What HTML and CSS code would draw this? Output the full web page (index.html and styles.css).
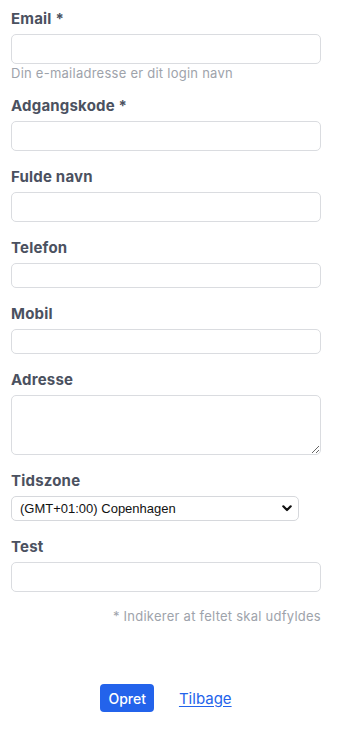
FILE: index.html
```html
<!DOCTYPE html>
<html lang="da">
<head>
<meta charset="utf-8">
<title>Opret bruger</title>
<link rel="stylesheet" href="styles.css">
</head>
<body>
<form class="form">
  <div class="field field-hinted">
    <label class="label" for="email">Email *</label>
    <input class="input" id="email" type="email">
    <p class="hint">Din e-mailadresse er dit login navn</p>
  </div>
  <div class="field">
    <label class="label" for="pw">Adgangskode *</label>
    <input class="input" id="pw" type="password">
  </div>
  <div class="field">
    <label class="label" for="name">Fulde navn</label>
    <input class="input" id="name" type="text">
  </div>
  <div class="field">
    <label class="label" for="tel">Telefon</label>
    <input class="input input-small" id="tel" type="tel">
  </div>
  <div class="field">
    <label class="label" for="mob">Mobil</label>
    <input class="input input-small" id="mob" type="tel">
  </div>
  <div class="field">
    <label class="label" for="addr">Adresse</label>
    <textarea class="input textarea" id="addr"></textarea>
  </div>
  <div class="field">
    <label class="label" for="tz">Tidszone</label>
    <select class="select" id="tz">
      <option>(GMT+01:00) Copenhagen</option>
    </select>
  </div>
  <div class="field">
    <label class="label" for="test">Test</label>
    <input class="input" id="test" type="text">
  </div>
  <p class="footnote">* Indikerer at feltet skal udfyldes</p>
  <div class="actions">
    <button class="btn" type="button">Opret</button>
    <a class="link" href="#">Tilbage</a>
  </div>
</form>
</body>
</html>
```
FILE: styles.css
```css
html, body {
  margin: 0;
  padding: 0;
  background: #ffffff;
}
body {
  font-family: Inter, "Noto Sans", "Liberation Sans", sans-serif;
  color: #4b5160;
}
.form {
  width: 310px;
  padding: 9px 0 0 11px;
  margin: 0;
}
.field {
  margin-bottom: 16px;
}
.label {
  display: block;
  font-size: 15px;
  font-weight: 700;
  line-height: 20px;
  letter-spacing: 0.2px;
  margin-bottom: 5px;
  color: #4b5160;
}
.input {
  display: block;
  box-sizing: border-box;
  width: 310px;
  height: 30px;
  margin: 0;
  padding: 4px 8px;
  border: 1px solid #dadce0;
  border-radius: 5px;
  background: #ffffff;
  font-family: inherit;
  font-size: 14px;
  outline: none;
}
.input-small {
  height: 25px;
}
.textarea {
  height: 60px;
  resize: vertical;
}
.hint {
  margin: 3px 0 0;
  font-size: 13px;
  line-height: 13px;
  letter-spacing: 0.25px;
  color: #9ea3ab;
}
.select {
  display: block;
  box-sizing: border-box;
  width: 288px;
  height: 25px;
  margin: 0;
  padding: 0 24px 0 8px;
  border: 1px solid #d6d8dc;
  border-radius: 5px;
  background: #ffffff url("data:image/svg+xml,%3Csvg xmlns='http://www.w3.org/2000/svg' width='10' height='7' viewBox='0 0 10 7'%3E%3Cpath d='M1.3 1.3 5 5 8.7 1.3' fill='none' stroke='%23111' stroke-width='2.2' stroke-linecap='round' stroke-linejoin='round'/%3E%3C/svg%3E") no-repeat right 6px center;
  -webkit-appearance: none;
  appearance: none;
  font-family: "Liberation Sans", Arial, sans-serif;
  font-size: 13px;
  color: #111111;
  outline: none;
}
.footnote {
  margin: 0;
  text-align: right;
  font-size: 13px;
  line-height: 16px;
  letter-spacing: 0.25px;
  color: #9ea3ab;
}
.actions {
  display: flex;
  justify-content: center;
  align-items: center;
  gap: 25px;
  margin-top: 60px;
}
.btn {
  box-sizing: border-box;
  height: 28px;
  padding: 0 8px;
  border: 0;
  border-radius: 4px;
  background: #2363eb;
  color: #ffffff;
  font-family: inherit;
  font-size: 14px;
  font-weight: 500;
  cursor: pointer;
}
.link {
  color: #2363eb;
  font-size: 15px;
  text-decoration: underline;
  text-underline-offset: 2px;
}
```
